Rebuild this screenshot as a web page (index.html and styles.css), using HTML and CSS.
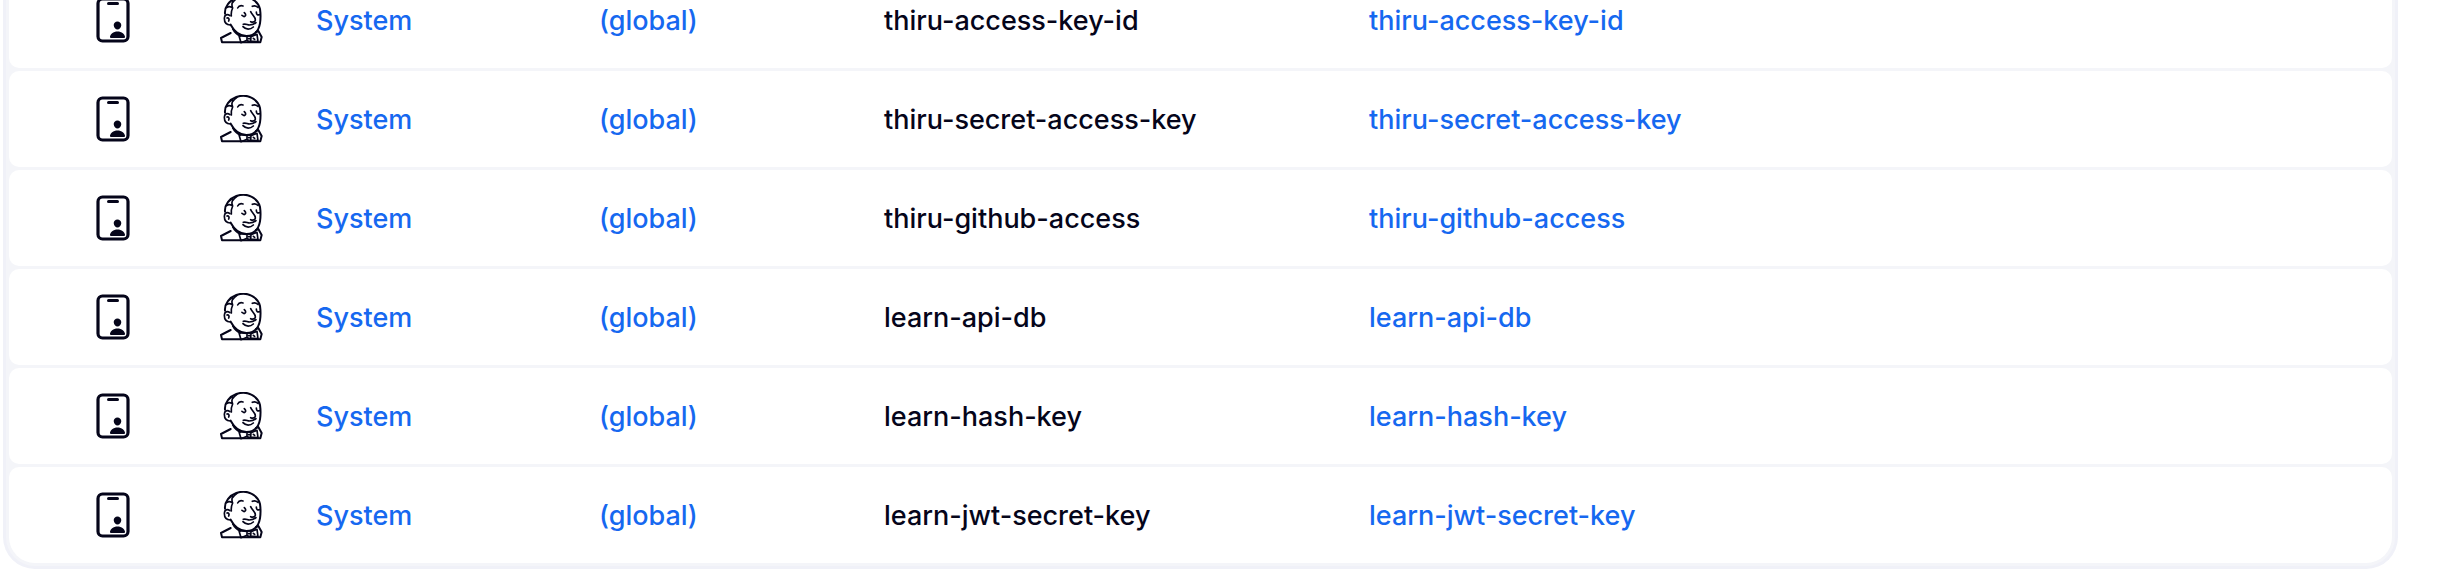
FILE: index.html
```
<!DOCTYPE html>
<html lang="en">
<head>
<meta charset="utf-8">
<title>Credentials</title>
<link rel="stylesheet" href="styles.css">
</head>
<body>
<svg class="sprite" aria-hidden="true">
  <symbol id="credential" viewBox="0 0 512 512">
    <rect x="96" y="32" width="320" height="448" rx="48" fill="none" stroke="currentColor" stroke-width="34"/>
    <path d="M208 80h96" fill="none" stroke="currentColor" stroke-width="32" stroke-linecap="round"/>
    <path d="M333 284a40 40 0 0 0-59 0c-7 8-11 19-10 31 2 24 20 43 40 43s38-19 40-43c1-12-3-23-11-31zM372 448H236a12 12 0 0 1-9-4 14 14 0 0 1-3-11c3-15 11-28 23-37 15-12 36-18 57-18s42 6 57 18c12 9 20 22 23 37a14 14 0 0 1-3 11 12 12 0 0 1-9 4z" fill="currentColor"/>
  </symbol>
  <symbol id="jenkins" viewBox="0 0 144 144">
    <g fill="none" stroke="currentColor" stroke-width="5" stroke-linecap="round" stroke-linejoin="round">
      <path d="M24 53C22 32 38 13 58 6c14-5 32-5 45 2 14 7 23 18 26 31 2 14 2 30 0 43-4 24-19 38-41 38-22-1-36-13-47-34" stroke-width="6"/>
      <path d="M47 17c-4 8-3 12 0 19-4 8-5 16-4 24M60 7c-6 4-10 8-13 13M29 35c5-4 10-4 15-1"/>
      <path d="M39 59c-8-6-17-3-17 8 0 11 5 20 18 20M30 66c5-1 8 4 5 9"/>
      <path d="M41 111L12 126l3 13h115l4-16-10-18-7 3M48 99c5 10 12 16 22 20" stroke-width="6"/>
      <path d="M62 36c3-6 9-8 16-6M106 31c6-3 11-2 17 3M82 50c6 6 5 10-1 12l-6-4M118 48c0 8 4 10 9 8"/>
      <path d="M101 47c4 10 19 20 13 28-3 4-8 4-13 2M79 85c7-3 12 2 18 2 8 0 14-2 20-7M78 92c9 10 22 9 31 1"/>
      <path d="M66 119l6 21 18-7V121zM90 121c4-2 9-2 12 1l-1 13c-4 2-8 1-11-2M102 122l18-7 3 22-22-2M95 128h3M109 127l4 3"/>
    </g>
  </symbol>
</svg>
<main class="pane">
  <table class="table">
    <colgroup><col class="col-kind"><col class="col-store"><col class="col-name"><col class="col-domain"><col class="col-id"><col></colgroup>
    <tbody>
      <tr><td class="kind"><svg class="icon"><use href="#credential"/></svg></td><td class="store"><svg class="icon"><use href="#jenkins"/></svg></td><td><a href="#">System</a></td><td><a href="#">(global)</a></td><td>thiru-access-key-id</td><td><a href="#">thiru-access-key-id</a></td></tr>
      <tr><td class="kind"><svg class="icon"><use href="#credential"/></svg></td><td class="store"><svg class="icon"><use href="#jenkins"/></svg></td><td><a href="#">System</a></td><td><a href="#">(global)</a></td><td>thiru-secret-access-key</td><td><a href="#">thiru-secret-access-key</a></td></tr>
      <tr><td class="kind"><svg class="icon"><use href="#credential"/></svg></td><td class="store"><svg class="icon"><use href="#jenkins"/></svg></td><td><a href="#">System</a></td><td><a href="#">(global)</a></td><td>thiru-github-access</td><td><a href="#">thiru-github-access</a></td></tr>
      <tr><td class="kind"><svg class="icon"><use href="#credential"/></svg></td><td class="store"><svg class="icon"><use href="#jenkins"/></svg></td><td><a href="#">System</a></td><td><a href="#">(global)</a></td><td>learn-api-db</td><td><a href="#">learn-api-db</a></td></tr>
      <tr><td class="kind"><svg class="icon"><use href="#credential"/></svg></td><td class="store"><svg class="icon"><use href="#jenkins"/></svg></td><td><a href="#">System</a></td><td><a href="#">(global)</a></td><td>learn-hash-key</td><td><a href="#">learn-hash-key</a></td></tr>
      <tr><td class="kind"><svg class="icon"><use href="#credential"/></svg></td><td class="store"><svg class="icon"><use href="#jenkins"/></svg></td><td><a href="#">System</a></td><td><a href="#">(global)</a></td><td>learn-jwt-secret-key</td><td><a href="#">learn-jwt-secret-key</a></td></tr>
    </tbody>
  </table>
</main>
</body>
</html>
```
FILE: styles.css
```
body {
  margin: 0;
  background: #fff;
  color: #05051a;
  font: 500 27px/36px Inter, "Liberation Sans", sans-serif;
  overflow: hidden;
}
.sprite {
  display: none;
}
.pane {
  margin: -34px 40px 0 3px;
  border: 3px solid #f0f1f8;
  border-top-width: 0;
  border-radius: 0 0 32px 32px;
  background: #f4f5f9;
  padding: 3px;
}
.table {
  width: 100%;
  table-layout: fixed;
  border-collapse: separate;
  border-spacing: 0 3px;
  margin-bottom: -3px;
}
.col-kind { width: 208px; }
.col-store { width: 99px; }
.col-name { width: 283px; }
.col-domain { width: 285px; }
.col-id { width: 485px; }
td {
  box-sizing: border-box;
  height: 96px;
  padding: 2px 0 0;
  background: #fff;
  vertical-align: middle;
}
td:first-child { border-radius: 10px 0 0 10px; }
td:last-child { border-radius: 0 10px 10px 0; }
tr:last-child td:first-child { border-bottom-left-radius: 26px; }
tr:last-child td:last-child { border-bottom-right-radius: 26px; }
.kind,
.store {
  padding: 0;
  line-height: 0;
}
.kind { text-align: center; }
.icon {
  display: inline-block;
  width: 48px;
  height: 48px;
  vertical-align: middle;
}
a {
  color: #1668f0;
  text-decoration: none;
}
```
